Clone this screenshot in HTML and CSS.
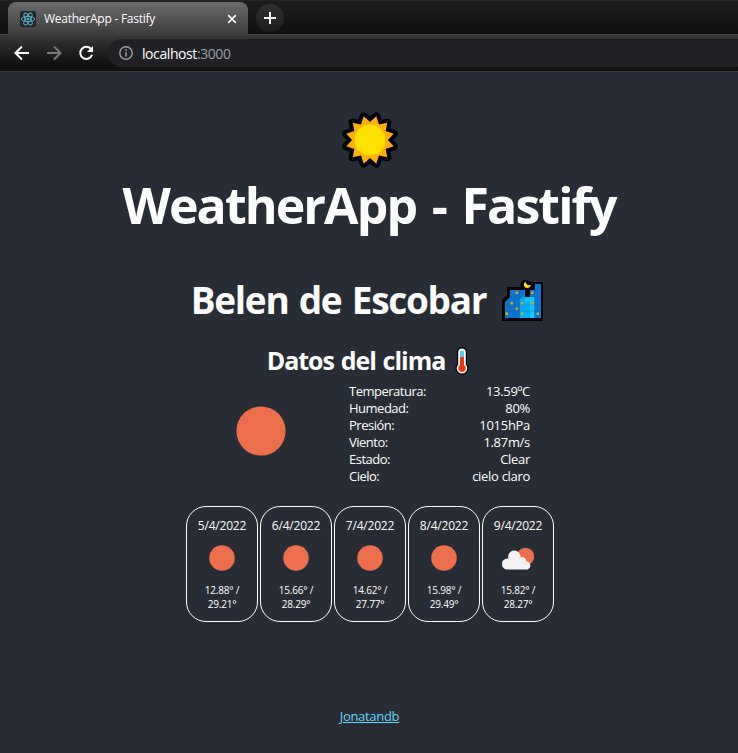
FILE: index.html
```html
<!DOCTYPE html>
<html lang="es">
<head>
<meta charset="utf-8">
<title>WeatherApp - Fastify</title>
<link rel="stylesheet" href="styles.css">
</head>
<body>
<svg class="defs" aria-hidden="true">
  <symbol id="sun" viewBox="0 0 26 26"><circle cx="13" cy="13" r="12.8" fill="#ec6e4c"/></symbol>
</svg>
<div class="browser">
  <div class="tabs">
    <div class="tab">
      <svg class="favicon" viewBox="0 0 16 16"><rect width="16" height="16" rx="2" fill="#20232a"/><g fill="none" stroke="#58b8ce" stroke-width=".9"><ellipse cx="8" cy="8" rx="6.7" ry="2.6"/><ellipse cx="8" cy="8" rx="6.7" ry="2.6" transform="rotate(60 8 8)"/><ellipse cx="8" cy="8" rx="6.7" ry="2.6" transform="rotate(120 8 8)"/></g><circle cx="8" cy="8" r="1.3" fill="#58b8ce"/></svg>
      <span class="tab-title">WeatherApp - Fastify</span>
      <svg class="close" viewBox="0 0 10 10"><path d="M1.200 1.200l7.600 7.600M8.800 1.200l-7.600 7.600" stroke="#fff" stroke-width="1.7"/></svg>
    </div>
    <div class="new-tab"><svg viewBox="0 0 12 12"><path d="M6 0v12M0 6h12" stroke="#fff" stroke-width="2"/></svg></div>
  </div>
  <div class="toolbar">
    <svg class="nav" viewBox="0 0 16 16"><path d="M15 8H2M8 1.500L1.500 8 8 14.500" fill="none" stroke="#fff" stroke-width="2"/></svg>
    <svg class="nav" viewBox="0 0 16 16"><path d="M1 8h13M8 1.500L14.500 8 8 14.500" fill="none" stroke="#77797b" stroke-width="2"/></svg>
    <svg class="nav" viewBox="0 0 16 16"><path d="M13.200 4.400A6 6 0 1 0 14 9.700" fill="none" stroke="#fff" stroke-width="2"/><path d="M15 1v6H9z" fill="#fff"/></svg>
    <div class="address">
      <svg class="info" viewBox="0 0 14 14"><circle cx="7" cy="7" r="6.2" fill="none" stroke="#9aa0a6" stroke-width="1.4"/><path d="M7 6.200v4.300M7 3.300v1.600" stroke="#9aa0a6" stroke-width="1.5"/></svg>
      <span class="url">localhost<span class="port">:3000</span></span>
    </div>
  </div>
</div>
<main class="app">
  <svg class="logo" viewBox="0 0 56 56"><path d="M28 10L34.300 4.300 37 12.400 45.300 10.700 43.600 19 51.700 21.700 46 28 51.700 34.300 43.600 37 45.300 45.300 37 43.600 34.300 51.700 28 46 21.700 51.700 19 43.600 10.700 45.300 12.400 37 4.300 34.300 10 28 4.300 21.700 12.400 19 10.700 10.700 19 12.400 21.700 4.300z" fill="#ffae0c" stroke="#000" stroke-width="8" stroke-linejoin="round" paint-order="stroke"/><circle cx="28" cy="28" r="15.500" fill="#ffe100"/></svg>
  <h1><span>WeatherApp - Fastify</span></h1>
  <h2><span>Belen de Escobar</span>
    <svg class="city" viewBox="0 0 43 42"><path d="M1 42V21l5-5V8h14a5 5 0 0 1 5-7l6 2 1 4V3h10v39z" fill="#000"/><path d="M4 39V23l5-5v-7h15v7h5v-7h5V5h6v34z" fill="#0a76cf"/><path d="M18.500 39V21l5-5v2h10v21z" fill="#00adf8"/><path d="M24 18h9.500v21H29V23h-5z" fill="#14c5ff"/><g stroke="#0a569e" stroke-width=".4" opacity=".7"><path d="M4 26h36M4 32h36M9 18h31M9 18v21M14 11v28M18.500 11v28M33.500 6v33"/></g><path d="M14.500 12.500h2.500v2.500h-2.500zM30 12.500h2.500v2.500h-2.500zM9.500 23H12v2.500H9.500zM20 23h2.500v2.500H20zM30.500 23H33v2.500h-2.500zM14.500 28.500h2.500V31h-2.500zM4.500 33.500H7V36H4.500zM20 33.500h2.500V36H20zM35.500 33.500H38V36h-2.500z" fill="#dda31d"/><path d="M24.500 2.500C21.500 5 23 9 26 9c2 0 3.500-1 4-3-2.500 1-5.500-.5-5.500-3.500z" fill="#ffe100"/></svg>
  </h2>
  <h3><span>Datos del clima</span>
    <svg class="thermo" viewBox="0 0 14 28"><path d="M2 5a5 5 0 0 1 10 0v12a6.500 6.500 0 1 1-10 0z" fill="#000"/><path d="M3.200 5.200a3.800 3.800 0 0 1 7.600 0v12.300a5.300 5.300 0 1 1-7.600 0z" fill="#fff"/><path d="M5 4h4v7H5z" fill="#4fd2f7"/><path d="M5 10h4v8a3.800 3.800 0 1 1-4 0z" fill="#f03a17"/></svg>
  </h3>
  <section class="current">
    <svg class="current-icon"><use href="#sun"/></svg>
    <dl>
      <div><dt>Temperatura:</dt><dd>13.59ºC</dd></div>
      <div><dt>Humedad:</dt><dd>80%</dd></div>
      <div><dt>Presión:</dt><dd>1015hPa</dd></div>
      <div><dt>Viento:</dt><dd>1.87m/s</dd></div>
      <div><dt>Estado:</dt><dd>Clear</dd></div>
      <div><dt>Cielo:</dt><dd>cielo claro</dd></div>
    </dl>
  </section>
  <section class="forecast">
    <article><time>5/4/2022</time><svg><use href="#sun"/></svg><p>12.88° /<br>29.21°</p></article>
    <article><time>6/4/2022</time><svg><use href="#sun"/></svg><p>15.66° /<br>28.29°</p></article>
    <article><time>7/4/2022</time><svg><use href="#sun"/></svg><p>14.62° /<br>27.77°</p></article>
    <article><time>8/4/2022</time><svg><use href="#sun"/></svg><p>15.98° /<br>29.49°</p></article>
    <article><time>9/4/2022</time><svg class="cloudy" viewBox="0 0 32 26"><circle cx="23.500" cy="11.500" r="8.700" fill="#ec6e4c"/><path d="M5.500 24.500a5.500 5.500 0 0 1-.3-11q.8-.1 1.300.1A6 6 0 0 1 18 9.500q.8 1.500.8 3a4.200 4.200 0 0 1 5.700 4 4.100 4.100 0 0 1 1 8z" fill="#f2f2f2"/></svg><p>15.82° /<br>28.27°</p></article>
  </section>
  <footer><a href="#">Jonatandb</a></footer>
</main>
</body>
</html>
```
FILE: styles.css
```css
* { box-sizing: border-box; }
body { margin: 0; height: 753px; overflow: hidden; background: #282c34; color: #fff; font-family: "Open Sans", "Noto Sans", sans-serif; }
svg { display: block; flex: none; }
.defs { width: 0; height: 0; position: absolute; }
.browser { height: 72px; background: linear-gradient(#1c1c1c, #101010 34px); }
.tabs { height: 34px; display: flex; padding: 1px 0 0 8px; border-top: 1px solid #242424; }
.tab { position: relative; width: 240px; height: 33px; display: flex; align-items: center; padding: 0 11px 0 12px; border-radius: 8px 8px 0 0; background: linear-gradient(#6b6b6b, #3c3c3c); }
.tab::after { content: ""; position: absolute; left: 0; right: 0; top: 32px; height: 2px; background: #3b3b3b; }
.favicon { width: 16px; height: 16px; }
.tab-title { flex: 1; margin-left: 8px; font-size: 12px; letter-spacing: -.25px; white-space: nowrap; }
.close { width: 10px; height: 10px; }
.new-tab { width: 28px; height: 28px; margin: 2px 0 0 8px; border-radius: 50%; background: linear-gradient(#303030, #1c1c1c); display: grid; place-items: center; }
.new-tab svg { width: 12px; height: 12px; }
.toolbar { height: 38px; border-top: 1px solid #484848; border-bottom: 1px solid #3c3c3c; background: linear-gradient(#383838, #121212 27px, #0e0e0e); display: flex; align-items: flex-start; padding: 4px 0 0 14px; }
.nav { width: 16px; height: 16px; margin: 6px 16px 0 0; }
.address { flex: 1; height: 28px; margin-left: -2px; border-radius: 14px 0 0 14px; background: #202124; display: flex; align-items: center; padding-left: 11px; }
.info { width: 14px; height: 14px; }
.url { margin-left: 9px; font-size: 14px; letter-spacing: -.42px; }
.port { color: #9aa0a6; }
.app { display: flex; flex-direction: column; align-items: center; padding-top: 40px; }
.logo { width: 56px; height: 56px; margin-left: 1px; overflow: visible; }
h1, h2, h3, p, dl, dd { margin: 0; }
h1, h2, h3 { display: flex; align-items: center; justify-content: center; white-space: nowrap; }
h1 { height: 76px; font-size: 50px; letter-spacing: -1.9px; word-spacing: 4.5px; }
h1 span { margin-top: -3px; }
h2 { height: 60px; margin: 25px 3px 0 0; gap: 15px; font-size: 37px; letter-spacing: -1.3px; word-spacing: 2px; }
.city { width: 43px; height: 42px; margin-top: 1px; }
h3 { height: 36px; margin: 14px 2px 0 0; gap: 10px; font-size: 25px; letter-spacing: -1px; word-spacing: 1.2px; }
h3 span { margin-top: -3px; }
.thermo { width: 14px; height: 28px; }
.current { width: 294px; height: 102px; margin: 4px 0 0 28px; display: flex; align-items: center; justify-content: space-between; }
.current-icon { width: 50px; height: 50px; margin-top: -7px; }
dl { width: 181px; font-size: 13px; line-height: 17px; letter-spacing: -.3px; }
dt { letter-spacing: -.5px; }
dl div { display: flex; justify-content: space-between; }
.forecast { display: flex; gap: 2px; margin-top: 21px; padding-left: 2px; }
article { width: 72px; height: 116px; border: 1px solid #fff; border-radius: 20px; display: flex; flex-direction: column; align-items: center; padding-top: 10px; }
time { font-size: 12px; line-height: 17px; letter-spacing: -.2px; }
article svg { width: 26px; height: 26px; margin-top: 11px; }
article .cloudy { width: 32px; }
article p { margin-top: 12px; font-size: 10px; line-height: 14px; text-align: center; letter-spacing: -.2px; }
footer { margin: 85px 0 0 1px; font-size: 13px; line-height: 18px; letter-spacing: -.3px; }
a { color: #61dafb; }
```
